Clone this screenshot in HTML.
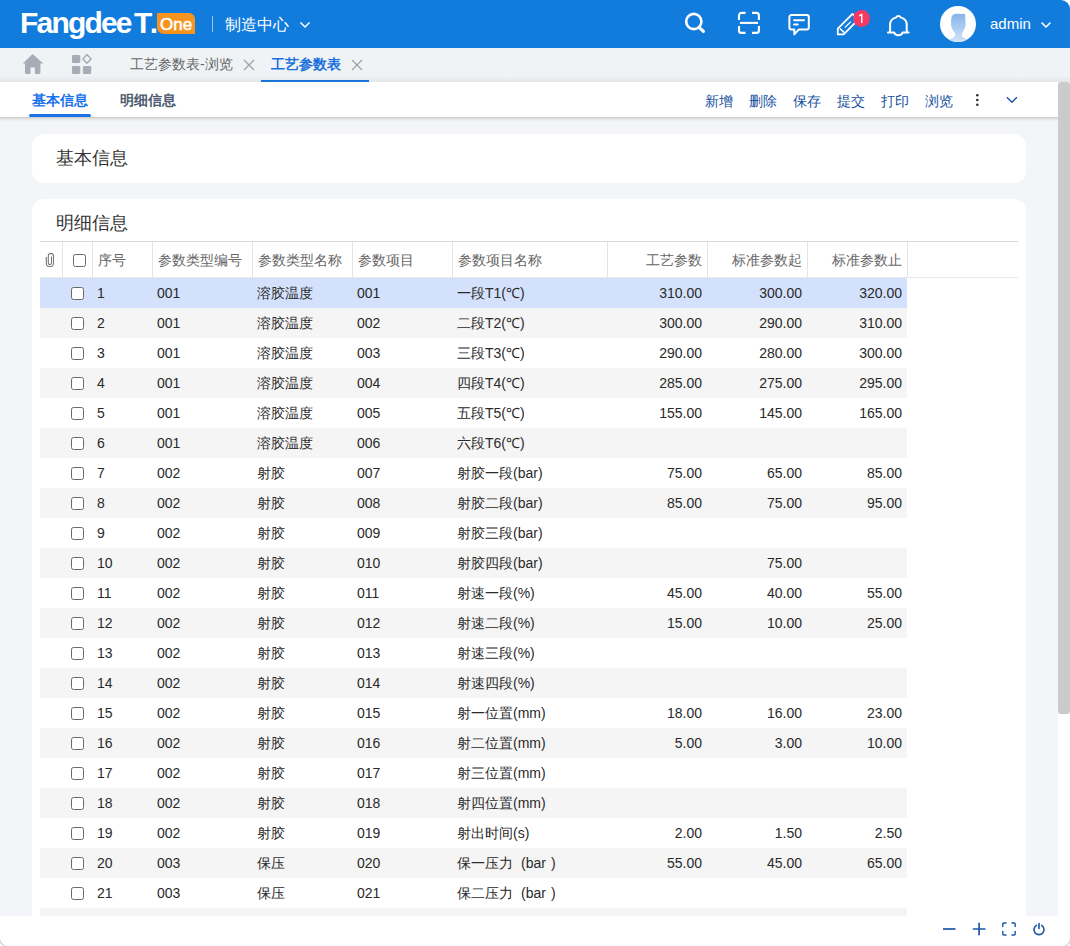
<!DOCTYPE html>
<html><head><meta charset="utf-8">
<style>
*{box-sizing:border-box;margin:0;padding:0}
html,body{width:1070px;height:946px;overflow:hidden;background:#fff;font-family:"Liberation Sans",sans-serif;position:relative}
.abs{position:absolute;white-space:nowrap}
#hdr{position:absolute;left:0;top:0;width:1070px;height:48px;background:#127cdd;border-top-right-radius:9px}
#tabs{position:absolute;left:0;top:48px;width:1070px;height:34px;background:#eff3f6}
#tool{position:absolute;left:0;top:82px;width:1058px;height:35px;background:#fff;}
#page{position:absolute;left:0;top:117px;width:1058px;height:799px;background:#f4f5f8}
#foot{position:absolute;left:0;top:916px;width:1070px;height:30px;background:#fff;border-bottom-right-radius:8px}
#sb{position:absolute;left:1058px;top:82px;width:12px;height:834px;background:#fff}
#thumb{position:absolute;left:1058px;top:82px;width:12px;height:632px;background:#cbcbcb;border-radius:3px}
.card{position:absolute;left:32px;width:994px;background:#fff;border-radius:12px}
.ctitle{position:absolute;left:56px;font-size:18px;color:#333;line-height:24px;white-space:nowrap}
.thb{position:absolute;left:40px;width:978px;height:1px;background:#d3dae2}
.thbb{position:absolute;left:40px;width:978px;height:1px;background:#e8e8e8}
.vl{position:absolute;width:1px;background:#e4e4e4}
.th{position:absolute;height:36px;line-height:38px;font-size:14px;color:#666;padding-left:6px;white-space:nowrap}
.th.r,.td.r{text-align:right;padding-left:0;padding-right:5px}
.td{position:absolute;height:30px;line-height:30px;font-size:14px;color:#2a2a2a;padding-left:5px;white-space:nowrap}
.row{position:absolute;left:40px;width:867px;height:30px;background:#fff}
.row.odd{background:#f5f5f5}
.row.sel{background:#d3e1fc}
.cb{position:absolute;width:13px;height:13px;border:1.5px solid #6a6a6a;border-radius:2.5px;background:#fff}
.tb{position:absolute;top:83px;height:35px;line-height:36px;font-size:14px;color:#1551a0;white-space:nowrap}
#shd{position:absolute;left:0;top:117px;width:1058px;height:5px;background:linear-gradient(#cbcbcb,#dedede 30%,#eeeff1 65%,#f4f5f8)}
#tshd{position:absolute;left:0;top:76px;width:1070px;height:6px;background:linear-gradient(rgba(228,230,233,0),#e4e6e9)}
.corner{position:absolute;width:16px;height:16px;border:1px solid #c8c8c8;border-top:none}

</style></head><body>
<div id="hdr"></div>
<div class="abs" style="left:20px;top:3px;font-size:30px;font-weight:bold;color:#fff;letter-spacing:-1.8px;line-height:40px">Fangdee</div><div class="abs" style="left:134px;top:3px;font-size:30px;font-weight:bold;color:#fff;letter-spacing:0.8px;line-height:40px">T.</div>
<div class="abs" style="left:157px;top:13px;width:38px;height:21px;background:#f7941d;border-radius:0 6px 0 7px"></div>
<div class="abs" style="left:160px;top:14px;font-size:17px;color:#fff;line-height:21px;-webkit-text-stroke:0.5px #fff">One</div>
<div class="abs" style="left:212px;top:16px;width:1px;height:16px;background:rgba(255,255,255,.55)"></div>
<div class="abs" style="left:225px;top:14px;font-size:16px;color:#fff;line-height:22px">制造中心</div>
<svg class="abs" style="left:299px;top:21px" width="12" height="8" viewBox="0 0 12 8"><path d="M1.5 1.5 L6 6 L10.5 1.5" fill="none" stroke="#fff" stroke-width="1.5"/></svg>
<!-- search -->
<svg class="abs" style="left:682px;top:9.5px" width="26" height="26" viewBox="0 0 26 26"><circle cx="11.8" cy="11.5" r="7.6" fill="none" stroke="#fff" stroke-width="2.6"/><path d="M17.4 17.6 L21.4 21.4" stroke="#fff" stroke-width="3.2" stroke-linecap="round"/></svg>
<!-- scan -->
<svg class="abs" style="left:736px;top:10px" width="26" height="26" viewBox="0 0 26 26"><path d="M3 9.9 V5.4 a2.5 2.5 0 0 1 2.5 -2.5 H9.5 M16 2.9 H20.4 a2.5 2.5 0 0 1 2.5 2.5 V9.9 M22.9 16.1 V20.4 a2.5 2.5 0 0 1 -2.5 2.5 H16 M9.5 22.9 H5.5 a2.5 2.5 0 0 1 -2.5 -2.5 V16.1" fill="none" stroke="#fff" stroke-width="2.1"/><path d="M3.9 12.9 H22" stroke="#fff" stroke-width="2.1"/></svg>
<!-- message -->
<svg class="abs" style="left:786px;top:11px" width="26" height="26" viewBox="0 0 26 26"><path d="M5.4 4 H20.8 a2 2 0 0 1 2 2 V16.6 a2 2 0 0 1 -2 2 H12.7 L8.3 23.2 V18.6 H5.4 a2 2 0 0 1 -2 -2 V6 a2 2 0 0 1 2 -2 Z" fill="none" stroke="#fff" stroke-width="2" stroke-linejoin="round"/><path d="M8.1 9.3 H18 M8.1 13.5 H11.7" stroke="#fff" stroke-width="2" stroke-linecap="round"/></svg>
<!-- pencil -->
<svg class="abs" style="left:832px;top:6px" width="30" height="34" viewBox="0 0 30 34"><path d="M5.8 22.6 L20.5 7.9 L26.3 13.7 L11.6 28.4 H5.8 Z" fill="none" stroke="#fff" stroke-width="1.8" stroke-linejoin="round"/><path d="M8 22.6 L12.2 26.5" stroke="#fff" stroke-width="1.6"/><path d="M12.9 21.5 L18.9 15.6" stroke="#fff" stroke-width="1.2"/></svg>
<div class="abs" style="left:853px;top:10px;width:17px;height:17px;border-radius:50%;background:#f43a62"></div><svg class="abs" style="left:853px;top:10px" width="17" height="17" viewBox="0 0 17 17"><path d="M6.3 5.9 L8.8 4.3 V13" fill="none" stroke="#fff" stroke-width="1.35" stroke-linejoin="round"/></svg>
<!-- bell -->
<svg class="abs" style="left:882px;top:10px" width="32" height="30" viewBox="0 0 32 30"><path d="M6 22.5 H12.2 C13 26.1 19.8 26.1 20.6 22.5 H26.6 M8.1 22.5 V14.5 C8.1 10.5 10.8 8.3 14.2 7.4 C15 5.6 17.8 5.6 18.6 7.4 C22 8.3 24.7 10.5 24.7 14.5 V22.5" fill="none" stroke="#fff" stroke-width="2" stroke-linecap="round" stroke-linejoin="round"/></svg>
<!-- avatar -->
<svg class="abs" style="left:940px;top:6px" width="36" height="36" viewBox="0 0 36 36"><defs><linearGradient id="ag" x1="0" y1="0" x2="0" y2="1"><stop offset="0" stop-color="#85b4ea"/><stop offset="1" stop-color="#d3e5f8"/></linearGradient><clipPath id="ac"><circle cx="18" cy="18" r="18"/></clipPath></defs><circle cx="18" cy="18" r="18" fill="#fff"/><path clip-path="url(#ac)" d="M11.2 13 C11.5 9.5 13 7.9 16 7.7 L25 7.9 C25.4 11 25.3 15 25.6 19.2 C25.4 22 23.5 24.5 22 27.2 V30.3 C23.5 31.8 26 32.8 28 34 L28 37 H8 V34 C10 32.8 13.5 31.8 15.1 30.3 V27.2 C13.5 25 11.5 23 11.1 19.5 Z" fill="url(#ag)"/></svg>
<div class="abs" style="left:990px;top:14px;font-size:15px;color:#fff;line-height:20px">admin</div>
<svg class="abs" style="left:1040px;top:21px" width="12" height="9" viewBox="0 0 12 9"><path d="M1.6 1.6 L6 6 L10.4 1.6" fill="none" stroke="#fff" stroke-width="1.5"/></svg>

<div id="tabs"></div>
<div id="tshd"></div>
<!-- home -->
<svg class="abs" style="left:22px;top:53px" width="22" height="22" viewBox="0 0 22 22"><path d="M10.6 1 L0.8 10.6 H3 V19.5 a1.5 1.5 0 0 0 1.5 1.5 H8.5 V14.5 H12.9 V21 H16.9 a1.5 1.5 0 0 0 1.5 -1.5 V10.6 H21.2 Z" fill="#a6adb7"/></svg>
<!-- apps -->
<svg class="abs" style="left:71px;top:53px" width="22" height="22" viewBox="0 0 22 22"><rect x="1" y="2" width="8.3" height="8" rx="1.3" fill="#a6adb7"/><rect x="1" y="12.9" width="8.3" height="8.1" rx="1.3" fill="#a6adb7"/><rect x="11.9" y="12.9" width="8.3" height="8.1" rx="1.3" fill="#a6adb7"/><path d="M16 1.6 L20.1 5.9 L16 10.2 L11.9 5.9 Z" fill="none" stroke="#a6adb7" stroke-width="1.5" stroke-linejoin="round"/></svg>
<div class="abs" style="left:130px;top:55px;font-size:14px;color:#666;line-height:18px">工艺参数表-浏览</div>
<svg class="abs" style="left:243px;top:59px" width="12" height="12" viewBox="0 0 12 12"><path d="M1 1 L11 11 M11 1 L1 11" stroke="#a2a2a2" stroke-width="1.3"/></svg>
<div class="abs" style="left:271px;top:55px;font-size:14px;color:#1a70dc;font-weight:bold;line-height:18px">工艺参数表</div>
<svg class="abs" style="left:351px;top:59px" width="12" height="12" viewBox="0 0 12 12"><path d="M1 1 L11 11 M11 1 L1 11" stroke="#a2a2a2" stroke-width="1.3"/></svg>
<div class="abs" style="left:261px;top:80px;width:108px;height:2px;background:#1a73d9"></div>

<div id="tool"></div>
<div class="abs" style="left:32px;top:90px;font-size:14px;color:#1a73e8;font-weight:bold;line-height:20px">基本信息</div>
<div class="abs" style="left:29px;top:114px;width:62px;height:3px;background:#1a73e8;border-radius:2px"></div>
<div class="abs" style="left:120px;top:90px;font-size:14px;color:#4b5a6e;font-weight:bold;line-height:20px">明细信息</div>
<div class="tb" style="left:705px">新增</div>
<div class="tb" style="left:749px">删除</div>
<div class="tb" style="left:793px">保存</div>
<div class="tb" style="left:837px">提交</div>
<div class="tb" style="left:881px">打印</div>
<div class="tb" style="left:925px">浏览</div>
<svg class="abs" style="left:975px;top:92px" width="5" height="15" viewBox="0 0 5 15"><circle cx="2.3" cy="3.2" r="1.3" fill="#2a2f3a"/><circle cx="2.3" cy="8" r="1.3" fill="#2a2f3a"/><circle cx="2.3" cy="12.7" r="1.3" fill="#2a2f3a"/></svg>
<svg class="abs" style="left:1005px;top:95px" width="14" height="9" viewBox="0 0 14 9"><path d="M1.9 2.3 L6.9 7.3 L11.9 2.3" fill="none" stroke="#1a55a5" stroke-width="1.4"/></svg>

<div id="page"></div>
<div id="shd"></div>
<div class="card" style="top:134px;height:49px"></div>
<div class="ctitle" style="top:146px">基本信息</div>
<div class="card" style="top:199px;height:760px"></div>
<div class="ctitle" style="top:211px">明细信息</div>
<div class="thb" style="top:241px"></div>
<div class="thbb" style="top:277px"></div>
<div class="vl" style="left:62px;top:242px;height:35px"></div>
<div class="vl" style="left:92px;top:242px;height:35px"></div>
<div class="vl" style="left:152px;top:242px;height:35px"></div>
<div class="vl" style="left:252px;top:242px;height:35px"></div>
<div class="vl" style="left:352px;top:242px;height:35px"></div>
<div class="vl" style="left:452px;top:242px;height:35px"></div>
<div class="vl" style="left:607px;top:242px;height:35px"></div>
<div class="vl" style="left:707px;top:242px;height:35px"></div>
<div class="vl" style="left:807px;top:242px;height:35px"></div>
<div class="vl" style="left:907px;top:242px;height:35px"></div>
<svg class="abs" style="left:45px;top:253px" width="10" height="14" viewBox="0 0 10 14"><path d="M6.5 3.5 V10 a1.6 1.6 0 0 1 -3.2 0 V3 a2.6 2.6 0 0 1 5.2 0 V10.2 a3.6 3.6 0 0 1 -7.2 0 V4" fill="none" stroke="#777" stroke-width="1.1"/></svg>
<div class="cb" style="left:73px;top:254px"></div>
<div class="th" style="left:92px;width:60px;top:241px">序号</div>
<div class="th" style="left:152px;width:100px;top:241px">参数类型编号</div>
<div class="th" style="left:252px;width:100px;top:241px">参数类型名称</div>
<div class="th" style="left:352px;width:100px;top:241px">参数项目</div>
<div class="th" style="left:452px;width:155px;top:241px">参数项目名称</div>
<div class="th r" style="left:607px;width:100px;top:241px">工艺参数</div>
<div class="th r" style="left:707px;width:100px;top:241px">标准参数起</div>
<div class="th r" style="left:807px;width:100px;top:241px">标准参数止</div>
<div class="row sel" style="top:278px"></div>
<div class="cb" style="left:71px;top:287px"></div>
<div class="td" style="left:92px;width:60px;top:278px">1</div>
<div class="td" style="left:152px;width:100px;top:278px">001</div>
<div class="td" style="left:252px;width:100px;top:278px">溶胶温度</div>
<div class="td" style="left:352px;width:100px;top:278px">001</div>
<div class="td" style="left:452px;width:155px;top:278px">一段T1(℃)</div>
<div class="td r" style="left:607px;width:100px;top:278px">310.00</div>
<div class="td r" style="left:707px;width:100px;top:278px">300.00</div>
<div class="td r" style="left:807px;width:100px;top:278px">320.00</div>
<div class="row odd" style="top:308px"></div>
<div class="cb" style="left:71px;top:317px"></div>
<div class="td" style="left:92px;width:60px;top:308px">2</div>
<div class="td" style="left:152px;width:100px;top:308px">001</div>
<div class="td" style="left:252px;width:100px;top:308px">溶胶温度</div>
<div class="td" style="left:352px;width:100px;top:308px">002</div>
<div class="td" style="left:452px;width:155px;top:308px">二段T2(℃)</div>
<div class="td r" style="left:607px;width:100px;top:308px">300.00</div>
<div class="td r" style="left:707px;width:100px;top:308px">290.00</div>
<div class="td r" style="left:807px;width:100px;top:308px">310.00</div>
<div class="row" style="top:338px"></div>
<div class="cb" style="left:71px;top:347px"></div>
<div class="td" style="left:92px;width:60px;top:338px">3</div>
<div class="td" style="left:152px;width:100px;top:338px">001</div>
<div class="td" style="left:252px;width:100px;top:338px">溶胶温度</div>
<div class="td" style="left:352px;width:100px;top:338px">003</div>
<div class="td" style="left:452px;width:155px;top:338px">三段T3(℃)</div>
<div class="td r" style="left:607px;width:100px;top:338px">290.00</div>
<div class="td r" style="left:707px;width:100px;top:338px">280.00</div>
<div class="td r" style="left:807px;width:100px;top:338px">300.00</div>
<div class="row odd" style="top:368px"></div>
<div class="cb" style="left:71px;top:377px"></div>
<div class="td" style="left:92px;width:60px;top:368px">4</div>
<div class="td" style="left:152px;width:100px;top:368px">001</div>
<div class="td" style="left:252px;width:100px;top:368px">溶胶温度</div>
<div class="td" style="left:352px;width:100px;top:368px">004</div>
<div class="td" style="left:452px;width:155px;top:368px">四段T4(℃)</div>
<div class="td r" style="left:607px;width:100px;top:368px">285.00</div>
<div class="td r" style="left:707px;width:100px;top:368px">275.00</div>
<div class="td r" style="left:807px;width:100px;top:368px">295.00</div>
<div class="row" style="top:398px"></div>
<div class="cb" style="left:71px;top:407px"></div>
<div class="td" style="left:92px;width:60px;top:398px">5</div>
<div class="td" style="left:152px;width:100px;top:398px">001</div>
<div class="td" style="left:252px;width:100px;top:398px">溶胶温度</div>
<div class="td" style="left:352px;width:100px;top:398px">005</div>
<div class="td" style="left:452px;width:155px;top:398px">五段T5(℃)</div>
<div class="td r" style="left:607px;width:100px;top:398px">155.00</div>
<div class="td r" style="left:707px;width:100px;top:398px">145.00</div>
<div class="td r" style="left:807px;width:100px;top:398px">165.00</div>
<div class="row odd" style="top:428px"></div>
<div class="cb" style="left:71px;top:437px"></div>
<div class="td" style="left:92px;width:60px;top:428px">6</div>
<div class="td" style="left:152px;width:100px;top:428px">001</div>
<div class="td" style="left:252px;width:100px;top:428px">溶胶温度</div>
<div class="td" style="left:352px;width:100px;top:428px">006</div>
<div class="td" style="left:452px;width:155px;top:428px">六段T6(℃)</div>
<div class="row" style="top:458px"></div>
<div class="cb" style="left:71px;top:467px"></div>
<div class="td" style="left:92px;width:60px;top:458px">7</div>
<div class="td" style="left:152px;width:100px;top:458px">002</div>
<div class="td" style="left:252px;width:100px;top:458px">射胶</div>
<div class="td" style="left:352px;width:100px;top:458px">007</div>
<div class="td" style="left:452px;width:155px;top:458px">射胶一段(bar)</div>
<div class="td r" style="left:607px;width:100px;top:458px">75.00</div>
<div class="td r" style="left:707px;width:100px;top:458px">65.00</div>
<div class="td r" style="left:807px;width:100px;top:458px">85.00</div>
<div class="row odd" style="top:488px"></div>
<div class="cb" style="left:71px;top:497px"></div>
<div class="td" style="left:92px;width:60px;top:488px">8</div>
<div class="td" style="left:152px;width:100px;top:488px">002</div>
<div class="td" style="left:252px;width:100px;top:488px">射胶</div>
<div class="td" style="left:352px;width:100px;top:488px">008</div>
<div class="td" style="left:452px;width:155px;top:488px">射胶二段(bar)</div>
<div class="td r" style="left:607px;width:100px;top:488px">85.00</div>
<div class="td r" style="left:707px;width:100px;top:488px">75.00</div>
<div class="td r" style="left:807px;width:100px;top:488px">95.00</div>
<div class="row" style="top:518px"></div>
<div class="cb" style="left:71px;top:527px"></div>
<div class="td" style="left:92px;width:60px;top:518px">9</div>
<div class="td" style="left:152px;width:100px;top:518px">002</div>
<div class="td" style="left:252px;width:100px;top:518px">射胶</div>
<div class="td" style="left:352px;width:100px;top:518px">009</div>
<div class="td" style="left:452px;width:155px;top:518px">射胶三段(bar)</div>
<div class="row odd" style="top:548px"></div>
<div class="cb" style="left:71px;top:557px"></div>
<div class="td" style="left:92px;width:60px;top:548px">10</div>
<div class="td" style="left:152px;width:100px;top:548px">002</div>
<div class="td" style="left:252px;width:100px;top:548px">射胶</div>
<div class="td" style="left:352px;width:100px;top:548px">010</div>
<div class="td" style="left:452px;width:155px;top:548px">射胶四段(bar)</div>
<div class="td r" style="left:707px;width:100px;top:548px">75.00</div>
<div class="row" style="top:578px"></div>
<div class="cb" style="left:71px;top:587px"></div>
<div class="td" style="left:92px;width:60px;top:578px">11</div>
<div class="td" style="left:152px;width:100px;top:578px">002</div>
<div class="td" style="left:252px;width:100px;top:578px">射胶</div>
<div class="td" style="left:352px;width:100px;top:578px">011</div>
<div class="td" style="left:452px;width:155px;top:578px">射速一段(%)</div>
<div class="td r" style="left:607px;width:100px;top:578px">45.00</div>
<div class="td r" style="left:707px;width:100px;top:578px">40.00</div>
<div class="td r" style="left:807px;width:100px;top:578px">55.00</div>
<div class="row odd" style="top:608px"></div>
<div class="cb" style="left:71px;top:617px"></div>
<div class="td" style="left:92px;width:60px;top:608px">12</div>
<div class="td" style="left:152px;width:100px;top:608px">002</div>
<div class="td" style="left:252px;width:100px;top:608px">射胶</div>
<div class="td" style="left:352px;width:100px;top:608px">012</div>
<div class="td" style="left:452px;width:155px;top:608px">射速二段(%)</div>
<div class="td r" style="left:607px;width:100px;top:608px">15.00</div>
<div class="td r" style="left:707px;width:100px;top:608px">10.00</div>
<div class="td r" style="left:807px;width:100px;top:608px">25.00</div>
<div class="row" style="top:638px"></div>
<div class="cb" style="left:71px;top:647px"></div>
<div class="td" style="left:92px;width:60px;top:638px">13</div>
<div class="td" style="left:152px;width:100px;top:638px">002</div>
<div class="td" style="left:252px;width:100px;top:638px">射胶</div>
<div class="td" style="left:352px;width:100px;top:638px">013</div>
<div class="td" style="left:452px;width:155px;top:638px">射速三段(%)</div>
<div class="row odd" style="top:668px"></div>
<div class="cb" style="left:71px;top:677px"></div>
<div class="td" style="left:92px;width:60px;top:668px">14</div>
<div class="td" style="left:152px;width:100px;top:668px">002</div>
<div class="td" style="left:252px;width:100px;top:668px">射胶</div>
<div class="td" style="left:352px;width:100px;top:668px">014</div>
<div class="td" style="left:452px;width:155px;top:668px">射速四段(%)</div>
<div class="row" style="top:698px"></div>
<div class="cb" style="left:71px;top:707px"></div>
<div class="td" style="left:92px;width:60px;top:698px">15</div>
<div class="td" style="left:152px;width:100px;top:698px">002</div>
<div class="td" style="left:252px;width:100px;top:698px">射胶</div>
<div class="td" style="left:352px;width:100px;top:698px">015</div>
<div class="td" style="left:452px;width:155px;top:698px">射一位置(mm)</div>
<div class="td r" style="left:607px;width:100px;top:698px">18.00</div>
<div class="td r" style="left:707px;width:100px;top:698px">16.00</div>
<div class="td r" style="left:807px;width:100px;top:698px">23.00</div>
<div class="row odd" style="top:728px"></div>
<div class="cb" style="left:71px;top:737px"></div>
<div class="td" style="left:92px;width:60px;top:728px">16</div>
<div class="td" style="left:152px;width:100px;top:728px">002</div>
<div class="td" style="left:252px;width:100px;top:728px">射胶</div>
<div class="td" style="left:352px;width:100px;top:728px">016</div>
<div class="td" style="left:452px;width:155px;top:728px">射二位置(mm)</div>
<div class="td r" style="left:607px;width:100px;top:728px">5.00</div>
<div class="td r" style="left:707px;width:100px;top:728px">3.00</div>
<div class="td r" style="left:807px;width:100px;top:728px">10.00</div>
<div class="row" style="top:758px"></div>
<div class="cb" style="left:71px;top:767px"></div>
<div class="td" style="left:92px;width:60px;top:758px">17</div>
<div class="td" style="left:152px;width:100px;top:758px">002</div>
<div class="td" style="left:252px;width:100px;top:758px">射胶</div>
<div class="td" style="left:352px;width:100px;top:758px">017</div>
<div class="td" style="left:452px;width:155px;top:758px">射三位置(mm)</div>
<div class="row odd" style="top:788px"></div>
<div class="cb" style="left:71px;top:797px"></div>
<div class="td" style="left:92px;width:60px;top:788px">18</div>
<div class="td" style="left:152px;width:100px;top:788px">002</div>
<div class="td" style="left:252px;width:100px;top:788px">射胶</div>
<div class="td" style="left:352px;width:100px;top:788px">018</div>
<div class="td" style="left:452px;width:155px;top:788px">射四位置(mm)</div>
<div class="row" style="top:818px"></div>
<div class="cb" style="left:71px;top:827px"></div>
<div class="td" style="left:92px;width:60px;top:818px">19</div>
<div class="td" style="left:152px;width:100px;top:818px">002</div>
<div class="td" style="left:252px;width:100px;top:818px">射胶</div>
<div class="td" style="left:352px;width:100px;top:818px">019</div>
<div class="td" style="left:452px;width:155px;top:818px">射出时间(s)</div>
<div class="td r" style="left:607px;width:100px;top:818px">2.00</div>
<div class="td r" style="left:707px;width:100px;top:818px">1.50</div>
<div class="td r" style="left:807px;width:100px;top:818px">2.50</div>
<div class="row odd" style="top:848px"></div>
<div class="cb" style="left:71px;top:857px"></div>
<div class="td" style="left:92px;width:60px;top:848px">20</div>
<div class="td" style="left:152px;width:100px;top:848px">003</div>
<div class="td" style="left:252px;width:100px;top:848px">保压</div>
<div class="td" style="left:352px;width:100px;top:848px">020</div>
<div class="td" style="left:452px;width:155px;top:848px">保一压力<span style="padding-left:8px">(</span>bar<span style="padding-left:5px">)</span></div>
<div class="td r" style="left:607px;width:100px;top:848px">55.00</div>
<div class="td r" style="left:707px;width:100px;top:848px">45.00</div>
<div class="td r" style="left:807px;width:100px;top:848px">65.00</div>
<div class="row" style="top:878px"></div>
<div class="cb" style="left:71px;top:887px"></div>
<div class="td" style="left:92px;width:60px;top:878px">21</div>
<div class="td" style="left:152px;width:100px;top:878px">003</div>
<div class="td" style="left:252px;width:100px;top:878px">保压</div>
<div class="td" style="left:352px;width:100px;top:878px">021</div>
<div class="td" style="left:452px;width:155px;top:878px">保二压力<span style="padding-left:8px">(</span>bar<span style="padding-left:5px">)</span></div>
<div class="row odd" style="top:908px"></div>
<div id="foot"></div>
<div class="abs" style="left:-1px;top:930px;width:16px;height:17px;border-left:1px solid #d0d0d0;border-bottom:1px solid #d0d0d0;border-bottom-left-radius:9px;border-right:none"></div>
<div class="abs" style="left:1055px;top:930px;width:16px;height:17px;border-right:1px solid #d0d0d0;border-bottom:1px solid #d0d0d0;border-bottom-right-radius:9px"></div>
<svg class="abs" style="left:940px;top:920px" width="18" height="18" viewBox="0 0 18 18"><path d="M3 9 H15.5" stroke="#1b55a6" stroke-width="1.7"/></svg>
<svg class="abs" style="left:970px;top:920px" width="18" height="18" viewBox="0 0 18 18"><path d="M2.8 9 H15.5 M9.1 2.8 V15.2" stroke="#1b55a6" stroke-width="1.7"/></svg>
<svg class="abs" style="left:1000px;top:920px" width="18" height="18" viewBox="0 0 18 18"><path d="M2.8 6.5 V4 a1 1 0 0 1 1 -1 H6 M12 3 H14.2 a1 1 0 0 1 1 1 V6.5 M15.2 11.5 V14 a1 1 0 0 1 -1 1 H12 M6 15 H3.8 a1 1 0 0 1 -1 -1 V11.5" fill="none" stroke="#1b55a6" stroke-width="1.4" stroke-linecap="round"/></svg>
<svg class="abs" style="left:1030px;top:920px" width="18" height="18" viewBox="0 0 18 18"><path d="M6.4 5.4 A5 5 0 1 0 11.6 5.4 M9 3.5 V8.5" fill="none" stroke="#1b55a6" stroke-width="1.6" stroke-linecap="round"/></svg>
<div id="sb"></div>
<div id="thumb"></div>

</body></html>
